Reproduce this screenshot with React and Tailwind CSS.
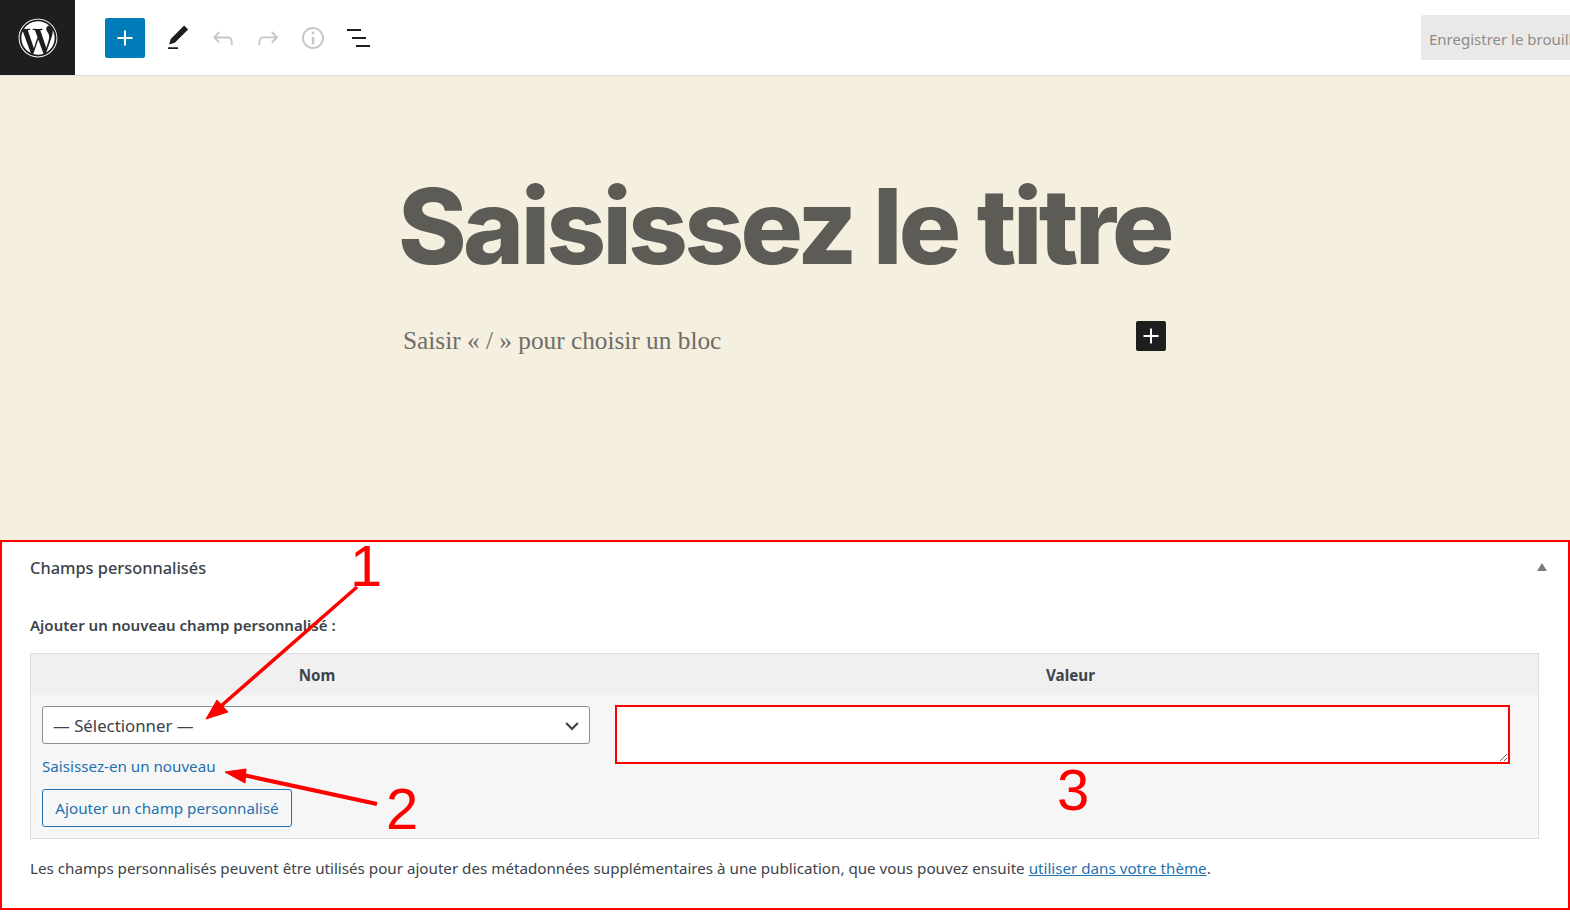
import React from 'react';
import { FaWordpress } from 'react-icons/fa';

const Icon = ({ d, className }) => (
  <svg viewBox="0 0 24 24" className={className} fill="currentColor">
    <path d={d} />
  </svg>
);

const PLUS = 'M18 11.2h-5.2V6h-1.6v5.2H6v1.6h5.2V18h1.6v-5.2H18z';
const PEN = 'M20.1 5.1L16.9 2 6.2 12.7l-1.3 4.4 4.5-1.3L20.1 5.1zM4 20.8h8v-1.5H4v1.5z';
const UNDO = 'M18.3 11.7c-.6-.6-1.4-.9-2.3-.9H6.7l2.9-3.3-1.1-1-4.5 5L8.5 16l1-1-2.7-2.7H16c.5 0 .9.2 1.3.5 1 1 1 3.4 1 4.5v.3h1.5v-.2c0-1.5 0-4.3-1.5-5.7z';
const REDO = 'M15.6 6.5l-1.1 1 2.9 3.3H8c-.9 0-1.7.3-2.3.9-1.4 1.5-1.4 4.2-1.4 5.6v.2h1.5v-.3c0-1.1 0-3.5 1-4.5.3-.3.7-.5 1.3-.5h9.2L14.5 15l1.1 1.1 4.6-4.6-4.6-5z';
const INFO = 'M12 3.2c-4.8 0-8.8 3.9-8.8 8.8 0 4.8 3.9 8.8 8.8 8.8 4.8 0 8.8-3.9 8.8-8.8 0-4.8-4-8.8-8.8-8.8zm0 16c-4 0-7.2-3.3-7.2-7.2C4.8 8 8 4.8 12 4.8s7.2 3.3 7.2 7.2c0 4-3.2 7.2-7.2 7.2zM11 17h2v-6h-2v6zm0-8h2V7h-2v2z';

const Toolbar = () => (
  <header className="h-[76px] flex border-b border-[#e4e0d8] bg-white">
    <div className="w-[75px] h-[75px] bg-[#1e1e1e] flex items-center justify-center text-white">
      <FaWordpress className="w-[40px] h-[40px]" />
    </div>
    <div className="flex items-center ml-[30px] h-[75px]">
      <button className="w-[40px] h-[40px] rounded-[2px] bg-[#007cba] text-white flex items-center justify-center">
        <Icon d={PLUS} className="w-[30px] h-[30px]" />
      </button>
      <div className="ml-[10px] w-[45px] flex justify-center text-[#1e1e1e]">
        <Icon d={PEN} className="w-[30px] h-[30px]" />
      </div>
      <div className="w-[45px] flex justify-center text-[#c9c5c5]">
        <Icon d={UNDO} className="w-[30px] h-[30px]" />
      </div>
      <div className="w-[45px] flex justify-center text-[#c9c5c5]">
        <Icon d={REDO} className="w-[30px] h-[30px]" />
      </div>
      <div className="w-[45px] flex justify-center text-[#c9c5c5]">
        <Icon d={INFO} className="w-[30px] h-[30px]" />
      </div>
      <div className="w-[45px] flex flex-col gap-[6px] pl-[12px] text-[#1e1e1e]">
        <span className="block h-[2px] w-[14px] bg-[#1e1e1e]" />
        <span className="block h-[2px] w-[14px] ml-[5px] bg-[#1e1e1e]" />
        <span className="block h-[2px] w-[14px] ml-[9px] bg-[#1e1e1e]" />
      </div>
    </div>
    <div className="ml-auto mt-[15px] w-[149px] h-[45px] bg-[#e9e9e9] rounded-l-[2px] overflow-hidden pl-[8px] pt-[4px] flex items-center">
      <span className="text-[15px] text-[#8f8b87] whitespace-nowrap">Enregistrer le brouillon</span>
    </div>
  </header>
);

const Editor = () => (
  <main className="h-[464px] bg-[#f5efe0] pl-[398px] pt-[90px]">
    <h1 className="text-[104px] leading-[120px] font-extrabold tracking-[-3.6px] text-[#5c5b55] whitespace-nowrap font-['Inter',sans-serif]">
      Saisissez le titre
    </h1>
    <div className="flex items-center w-[768px] mt-[36px] pl-[5px]">
      <p className="text-[25.3px] text-[#6e6d67] font-['Liberation_Serif',serif]">Saisir « / » pour choisir un bloc</p>
      <button className="ml-auto w-[30px] h-[30px] rounded-[2px] bg-[#1e1e1e] text-white flex items-center justify-center -mt-[9px]">
        <Icon d={PLUS} className="w-[30px] h-[30px]" />
      </button>
    </div>
  </main>
);

const CustomFields = () => (
  <section className="h-[370px] border-2 border-[#ff0000] bg-white text-[#3c434a] text-[15.18px]">
    <div className="h-[52px] pt-[1px] flex items-center justify-between pl-[28px] pr-[21px]">
      <h2 className="text-[16.35px] font-medium">Champs personnalisés</h2>
      <svg viewBox="0 0 10 8" className="w-[10px] h-[8px] mt-[-3px] text-[#787c82]" fill="currentColor">
        <path d="M5 0l5 8H0z" />
      </svg>
    </div>
    <div className="pl-[28px] pr-[29px] pt-[20px]">
      <p className="text-[15.05px] font-semibold leading-[22px]">Ajouter un nouveau champ personnalisé :</p>
      <div className="mt-[17px] border border-[#dcdcde] bg-[#f6f6f6] h-[186px]">
        <div className="h-[41px] pt-[1px] bg-[#f0f0f0] flex items-center font-bold">
          <div className="w-[572px] text-center">Nom</div>
          <div className="flex-1 text-center">Valeur</div>
        </div>
        <div className="flex pt-[11px] pl-[11px]">
          <div className="w-[548px]">
            <div className="h-[38px] border border-[#8c8f94] rounded-[3px] bg-white flex items-center justify-between pl-[10px] pr-[7px] pt-[1px] text-[16.8px]">
              <span>— Sélectionner —</span>
              <svg viewBox="0 0 24 24" className="w-[20px] h-[20px]" fill="none" stroke="currentColor" strokeWidth="2.6">
                <path d="M5 8.5l7 7 7-7" />
              </svg>
            </div>
            <a className="block mt-[11px] text-[#2271b1] leading-[22px]">Saisissez-en un nouveau</a>
            <button className="block mt-[12px] h-[38px] w-[250px] border border-[#2271b1] rounded-[3px] bg-[#f6f7f7] text-[#2271b1]">
              Ajouter un champ personnalisé
            </button>
          </div>
          <textarea className="ml-[25px] -mt-[1px] w-[895px] h-[59px] border-2 border-[#ff0000] bg-white outline-none" />
        </div>
      </div>
      <p className="mt-[18px] leading-[22px]">
        Les champs personnalisés peuvent être utilisés pour ajouter des métadonnées supplémentaires à une publication, que vous pouvez ensuite{' '}
        <a className="text-[#2271b1] underline">utiliser dans votre thème</a>.
      </p>
    </div>
  </section>
);

const Annotations = () => (
  <div className="absolute inset-0 pointer-events-none">
    <svg className="absolute inset-0" width="1570" height="912" fill="#ff0000" stroke="#ff0000">
      <path d="M357 587L221 706" strokeWidth="3.5" fill="none" />
      <path d="M206 719l11-19 11 12z" strokeWidth="1" />
      <path d="M377 804L243 775" strokeWidth="4" fill="none" />
      <path d="M225 772l21-3-1 14z" strokeWidth="1" />
    </svg>
    <span className="absolute left-[350px] top-[530px] text-[58px] leading-[72px] text-[#ff0000] font-['Liberation_Sans',sans-serif]">1</span>
    <span className="absolute left-[386px] top-[773px] text-[58px] leading-[72px] text-[#ff0000] font-['Liberation_Sans',sans-serif]">2</span>
    <span className="absolute left-[1057px] top-[754px] text-[58px] leading-[72px] text-[#ff0000] font-['Liberation_Sans',sans-serif]">3</span>
  </div>
);

export default function App() {
  return (
    <div className="relative w-[1570px] h-[912px] overflow-hidden bg-white font-['Noto_Sans',sans-serif]">
      <Toolbar />
      <Editor />
      <CustomFields />
      <Annotations />
    </div>
  );
}
